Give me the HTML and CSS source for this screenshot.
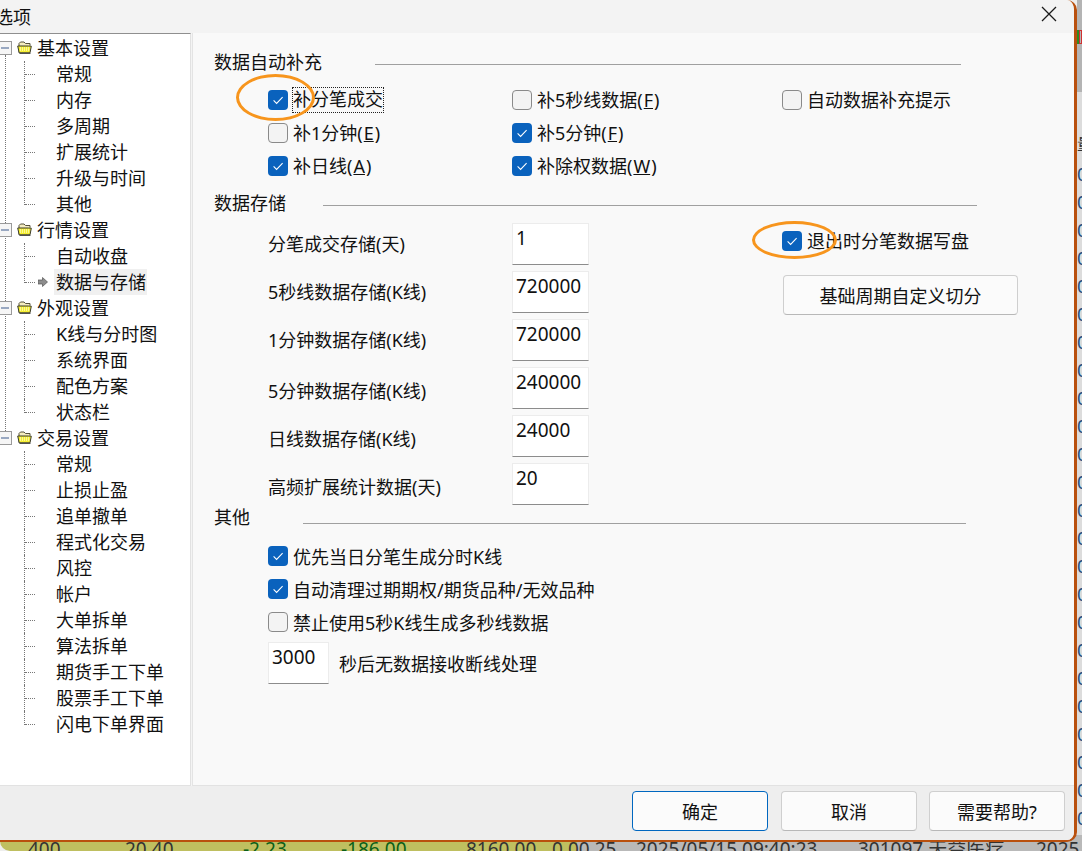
FILE: index.html
```html
<!DOCTYPE html>
<html lang="zh-CN">
<head>
<meta charset="utf-8">
<title>选项</title>
<link rel="stylesheet" href="styles.css">
</head>
<body>
<svg class="defs" width="0" height="0" aria-hidden="true">
  <symbol id="tick" viewBox="0 0 20 20"><path d="M5.6 10.4 8.6 13.4 14.6 7.2" fill="none" stroke="#fff" stroke-width="1.1"/></symbol>
  <symbol id="folder" viewBox="0 0 15 13">
    <path d="M2 11.5V2.5L3.5 1H7L8.5 2.5H13V4.5" fill="#f4ecc0" stroke="#55503a"/>
    <path d="M.7 5H11.5L14.3 5.2 13 11.8H2.2Z" fill="#f5ee30" stroke="#3a3a2a"/>
    <path d="M3 7H12M3 9H12" stroke="#fff" stroke-width="1" stroke-dasharray="1 1"/>
    <path d="M2.5 12.4H13.5" stroke="#444"/>
  </symbol>
  <symbol id="minus" viewBox="0 0 13 14"><rect x=".5" y=".5" width="12" height="13" fill="#f6f6f6" stroke="#9a9a9a"/><path d="M2 7H10" stroke="#3c5a8c"/></symbol>
  <symbol id="arrow" viewBox="0 0 10 10"><path d="M0 3H4.5V.5L9.5 5 4.5 9.5V7H0Z" fill="#8d8d8d" stroke="#555" stroke-width=".7"/></symbol>
</svg>

<div class="desktop">
  <div class="side-strip">
    <div class="side-top"><span class="mark-green"></span><span class="mark-red"></span></div>
    <div class="side-head">量</div>
    <div class="side-zero">0</div><div class="side-zero">0</div><div class="side-zero">0</div><div class="side-zero">0</div>
    <div class="side-zero">0</div><div class="side-zero">0</div><div class="side-zero">0</div><div class="side-zero">0</div>
    <div class="side-zero">0</div><div class="side-zero">0</div><div class="side-zero">0</div><div class="side-zero">0</div>
    <div class="side-zero">0</div><div class="side-zero">0</div><div class="side-zero">0</div><div class="side-zero">0</div>
    <div class="side-zero">0</div><div class="side-zero">0</div><div class="side-zero">0</div><div class="side-zero">0</div>
    <div class="side-zero">0</div><div class="side-zero">0</div><div class="side-zero">0</div><div class="side-zero">0</div>
  </div>
  <div class="bottom-strip">
    <span class="dark">400</span><span class="dark">20.40</span><span class="green">-2.23</span><span class="green">-186.00</span><span class="dark">8160.00</span><span class="dark">0.00 25</span><span class="dark">2025/05/15 09:40:23</span><span class="dark">301097 天益医疗</span><span class="dark">2025</span>
  </div>
</div>

<main class="dialog">
  <header class="titlebar">
    <span class="title">选项</span>
    <svg class="close" width="16" height="16" viewBox="0 0 16 16"><path d="M1 1 15 15M15 1 1 15" stroke="#1a1a1a" stroke-width="1.3"/></svg>
  </header>
  <div class="content">
    <nav class="tree">
      <div class="root"><svg class="minus"><use href="#minus"/></svg><svg class="folder"><use href="#folder"/></svg><span>基本设置</span></div>
      <div class="leaf"><span>常规</span></div>
      <div class="leaf"><span>内存</span></div>
      <div class="leaf"><span>多周期</span></div>
      <div class="leaf"><span>扩展统计</span></div>
      <div class="leaf"><span>升级与时间</span></div>
      <div class="leaf last"><span>其他</span></div>
      <div class="root"><svg class="minus"><use href="#minus"/></svg><svg class="folder"><use href="#folder"/></svg><span>行情设置</span></div>
      <div class="leaf"><span>自动收盘</span></div>
      <div class="leaf last"><svg class="arrow"><use href="#arrow"/></svg><span class="selected">数据与存储</span></div>
      <div class="root"><svg class="minus"><use href="#minus"/></svg><svg class="folder"><use href="#folder"/></svg><span>外观设置</span></div>
      <div class="leaf"><span>K线与分时图</span></div>
      <div class="leaf"><span>系统界面</span></div>
      <div class="leaf"><span>配色方案</span></div>
      <div class="leaf last"><span>状态栏</span></div>
      <div class="root"><svg class="minus"><use href="#minus"/></svg><svg class="folder"><use href="#folder"/></svg><span>交易设置</span></div>
      <div class="leaf"><span>常规</span></div>
      <div class="leaf"><span>止损止盈</span></div>
      <div class="leaf"><span>追单撤单</span></div>
      <div class="leaf"><span>程式化交易</span></div>
      <div class="leaf"><span>风控</span></div>
      <div class="leaf"><span>帐户</span></div>
      <div class="leaf"><span>大单拆单</span></div>
      <div class="leaf"><span>算法拆单</span></div>
      <div class="leaf"><span>期货手工下单</span></div>
      <div class="leaf"><span>股票手工下单</span></div>
      <div class="leaf last"><span>闪电下单界面</span></div>
    </nav>

    <section class="panel">
      <h2 class="group"><span>数据自动补充</span><i class="rule rule-a"></i></h2>
      <div class="check-grid">
        <label class="check"><span class="box on"><svg><use href="#tick"/></svg></span><span class="focus">补分笔成交</span></label>
        <label class="check"><span class="box"></span><span>补5秒线数据(<u>F</u>)</span></label>
        <label class="check"><span class="box"></span><span>自动数据补充提示</span></label>
        <label class="check"><span class="box"></span><span>补1分钟(<u>E</u>)</span></label>
        <label class="check"><span class="box on"><svg><use href="#tick"/></svg></span><span>补5分钟(<u>F</u>)</span></label>
        <span></span>
        <label class="check"><span class="box on"><svg><use href="#tick"/></svg></span><span>补日线(<u>A</u>)</span></label>
        <label class="check"><span class="box on"><svg><use href="#tick"/></svg></span><span>补除权数据(<u>W</u>)</span></label>
      </div>

      <h2 class="group group-b"><span>数据存储</span><i class="rule rule-b"></i></h2>
      <div class="storage">
        <div class="fields">
          <div class="field"><span>分笔成交存储(天)</span><div class="input">1</div></div>
          <div class="field"><span>5秒线数据存储(K线)</span><div class="input">720000</div></div>
          <div class="field"><span>1分钟数据存储(K线)</span><div class="input">720000</div></div>
          <div class="field low"><span>5分钟数据存储(K线)</span><div class="input">240000</div></div>
          <div class="field low"><span>日线数据存储(K线)</span><div class="input">24000</div></div>
          <div class="field low"><span>高频扩展统计数据(天)</span><div class="input">20</div></div>
        </div>
        <div class="storage-side">
          <label class="check"><span class="box on"><svg><use href="#tick"/></svg></span><span>退出时分笔数据写盘</span></label>
          <button class="btn btn-wide" type="button">基础周期自定义切分</button>
        </div>
      </div>

      <h2 class="group group-c"><span>其他</span><i class="rule rule-c"></i></h2>
      <div class="other">
        <label class="check"><span class="box on"><svg><use href="#tick"/></svg></span><span>优先当日分笔生成分时K线</span></label>
        <label class="check"><span class="box on"><svg><use href="#tick"/></svg></span><span>自动清理过期期权/期货品种/无效品种</span></label>
        <label class="check"><span class="box"></span><span>禁止使用5秒K线生成多秒线数据</span></label>
        <div class="timeout"><div class="input input-short">3000</div><span>秒后无数据接收断线处理</span></div>
      </div>
    </section>
  </div>
  <footer class="footer">
    <button class="btn btn-foot btn-default" type="button">确定</button>
    <button class="btn btn-foot" type="button">取消</button>
    <button class="btn btn-foot" type="button">需要帮助?</button>
  </footer>
  <i class="ring ring-a"></i>
  <i class="ring ring-b"></i>
</main>
</body>
</html>
```
FILE: styles.css
```css
* { box-sizing: border-box; }
html, body { margin: 0; padding: 0; }
body {
  width: 1082px;
  height: 851px;
  position: relative;
  overflow: hidden;
  background: #eeeeee;
  font-family: "Noto Sans", "Noto Sans CJK SC", sans-serif;
  font-size: 18px;
  color: #111;
}
.defs { position: absolute; }

/* What shows behind the dialog */
.desktop { position: absolute; inset: 0; }
.side-strip { position: absolute; left: 1077px; top: 0; width: 5px; height: 841px; overflow: hidden; background: #dcdcdc; }
.side-top { height: 92px; padding-top: 30px; background: #b4b4b4; display: flex; }
.mark-green { width: 2px; height: 14px; background: #2e8b20; }
.mark-red { width: 3px; height: 14px; border: 1px solid #d03030; }
.side-head { height: 68px; padding-top: 42px; line-height: 20px; font-size: 16px; color: #333; overflow: hidden; }
.side-zero { height: 28px; line-height: 28px; font-size: 18px; color: #1f4f80; margin-top: 0; }
.bottom-strip {
  position: absolute;
  left: 0;
  top: 835px;
  width: 1082px;
  height: 16px;
  padding-left: 28px;
  overflow: hidden;
  display: grid;
  grid-template-columns: 97px 118px 98px 125px 86px 84px 222px 178px 60px;
  background: linear-gradient(to right, #bfbf60 577px, #b9b9b9 577px);
  border-bottom-left-radius: 10px;
  font-size: 19px;
  line-height: 28px;
  white-space: nowrap;
}
.dark { color: #333; }
.green { color: #0b5f18; }

/* Dialog window */
.dialog {
  position: absolute;
  left: 0;
  top: 0;
  width: 1077px;
  height: 842px;
  display: flex;
  flex-direction: column;
  background: #f3f3f3;
  border-right: 3px solid #b9500e;
  border-bottom: 2px solid #b9500e;
  border-radius: 0 10px 10px 0;
  overflow: hidden;
}
.titlebar { height: 33px; flex: none; display: flex; align-items: center; justify-content: space-between; padding: 0 17px 0 0; background: #f3f3f3; }
.title { margin-left: -5px; line-height: 26px; }
.close { margin-top: -6px; }
.content { height: 753px; flex: none; display: flex; background: #f4f4f4; }

/* Tree */
.tree {
  width: 191px;
  flex: none;
  position: relative;
  padding-top: 1px;
  background: #fff;
  border-top: 1px solid #8f8f8f;
  border-right: 1px solid #e2e2e2;
  border-bottom: 1px solid #e2e2e2;
  overflow: hidden;
}
.tree::before { content: ""; position: absolute; left: 5px; top: 21px; height: 384px; border-left: 1px dotted #777; }
.root, .leaf { height: 26px; display: flex; align-items: center; line-height: 26px; white-space: nowrap; position: relative; }
.root { padding-left: 37px; }
.leaf { padding-left: 56px; }
.leaf::before { content: ""; position: absolute; left: 24px; top: 0; height: 100%; border-left: 1px dotted #777; }
.leaf.last::before { height: 14px; }
.leaf::after { content: ""; position: absolute; left: 25px; top: 13px; width: 10px; border-top: 1px dotted #777; }
.minus { position: absolute; left: -1px; top: 6px; width: 13px; height: 14px; }
.folder { position: absolute; left: 17px; top: 6px; width: 15px; height: 13px; }
.arrow { position: absolute; left: 38px; top: 8px; width: 10px; height: 10px; }
.selected { background: #f0f0f0; margin-left: -2px; padding: 0 1px 0 2px; }

/* Right panel */
.panel {
  flex: 1;
  margin-left: 1px;
  padding: 16px 0 0 22px;
  background: #f9f9f9;
  border-left: 1px solid #e4e4e4;
  border-bottom: 1px solid #e2e2e2;
}
.group { margin: 0 0 0 -1px; height: 26px; display: flex; align-items: center; font-size: 18px; font-weight: 400; line-height: 26px; }
.rule { display: block; height: 1px; margin-top: 4px; background: #a0a0a0; }
.rule-a { width: 586px; margin-left: 53px; }
.rule-b { width: 654px; margin-left: 37px; }
.rule-c { width: 663px; margin-left: 53px; margin-top: 12px; }
.check-grid { margin: 9px 0 0 53px; display: grid; grid-template-columns: 244px 270px 1fr; grid-auto-rows: 33px; align-items: center; }
.check { display: flex; align-items: center; height: 33px; white-space: nowrap; }
.check > span:last-child { padding-bottom: 3px; }
.check u { margin: 0 1px; }
.box { width: 20px; height: 20px; flex: none; margin: 0 5px 1px 0; border: 1px solid #8a8a8a; border-radius: 4px; background: #f3f3f3; }
.box.on { border: 0; background: #0a62bd; }
.box svg { display: block; width: 20px; height: 20px; }
.check > .focus { outline: 1px dotted #222; outline-offset: 0; height: 24px; line-height: 22px; padding: 0; margin-bottom: 1px; }
.group-b { margin-top: 7px; }
.storage { margin: 7px 0 0 53px; display: flex; height: 281px; }
.fields { width: 321px; display: grid; grid-auto-rows: 42px; row-gap: 6px; }
.field { display: flex; align-items: center; justify-content: space-between; white-space: nowrap; }
.field > span { padding-bottom: 2px; }
.field.low > span { padding: 4px 0 0; }
.input {
  width: 77px;
  height: 42px;
  padding: 1px 0 0 3px;
  background: #fff;
  border: 1px solid #ececec;
  border-bottom-color: #8c8c8c;
  font-size: 19px;
  line-height: 26px;
}
.storage-side { margin-left: 193px; padding-top: 2px; display: flex; flex-direction: column; }
.btn {
  font: inherit;
  color: #111;
  background: #fbfbfb;
  border: 1px solid #cfcfcf;
  border-bottom-color: #b8b8b8;
  border-radius: 4px;
  padding: 0;
}
.btn-wide { width: 235px; height: 40px; margin: 17px 0 0 1px; }
.group-c { margin-top: 0; }
.other { margin: 10px 0 0 53px; }
.other .check > span:last-child { padding-bottom: 2px; }
.timeout { display: flex; align-items: center; margin-top: 3px; }
.input-short { width: 61px; }
.timeout > span { margin-left: 10px; }

/* Footer */
.footer { flex: 1; display: flex; justify-content: flex-end; align-items: flex-start; padding: 5px 9px 0 0; gap: 12px; background: #eeeeee; }
.btn-foot { width: 136px; height: 40px; }
.btn-default { border: 1px solid #0067c0; border-bottom-color: #0067c0; margin-right: 1px; }

/* Hand-drawn highlight rings */
.ring { position: absolute; display: block; border: 3px solid #f7951d; border-radius: 50%; }
.ring-a { left: 236px; top: 74px; width: 79px; height: 47px; }
.ring-b { left: 752px; top: 221px; width: 85px; height: 38px; }
```
